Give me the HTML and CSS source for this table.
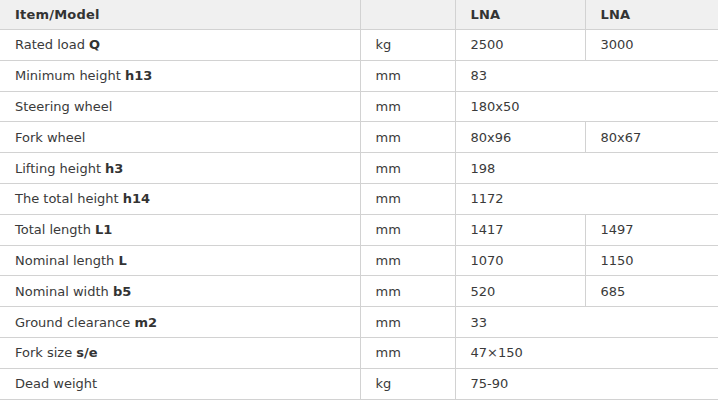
FILE: index.html
```html
<!DOCTYPE html>
<html>
<head>
<meta charset="utf-8">
<link rel="stylesheet" href="styles.css">
</head>
<body>
<table class="spec">
  <colgroup>
    <col class="c-item"><col class="c-unit"><col class="c-v1"><col class="c-v2">
  </colgroup>
  <thead>
    <tr><th>Item/Model</th><th></th><th>LNA</th><th>LNA</th></tr>
  </thead>
  <tbody>
    <tr><td>Rated load <b>Q</b></td><td>kg</td><td>2500</td><td>3000</td></tr>
    <tr><td>Minimum height <b>h13</b></td><td>mm</td><td colspan="2">83</td></tr>
    <tr><td>Steering wheel</td><td>mm</td><td colspan="2">180x50</td></tr>
    <tr><td>Fork wheel</td><td>mm</td><td>80x96</td><td>80x67</td></tr>
    <tr><td>Lifting height <b>h3</b></td><td>mm</td><td colspan="2">198</td></tr>
    <tr><td>The total height <b>h14</b></td><td>mm</td><td colspan="2">1172</td></tr>
    <tr><td>Total length <b>L1</b></td><td>mm</td><td>1417</td><td>1497</td></tr>
    <tr><td>Nominal length <b>L</b></td><td>mm</td><td>1070</td><td>1150</td></tr>
    <tr><td>Nominal width <b>b5</b></td><td>mm</td><td>520</td><td>685</td></tr>
    <tr><td>Ground clearance <b>m2</b></td><td>mm</td><td colspan="2">33</td></tr>
    <tr><td>Fork size <b>s/e</b></td><td>mm</td><td colspan="2">47×150</td></tr>
    <tr><td>Dead weight</td><td>kg</td><td colspan="2">75-90</td></tr>
  </tbody>
</table>
</body>
</html>
```
FILE: styles.css
```css
html, body {
  margin: 0;
  padding: 0;
  background: #fff;
  overflow: hidden;
}
.spec {
  border-collapse: collapse;
  table-layout: fixed;
  width: 760px;
  font-family: "DejaVu Sans", Verdana, sans-serif;
  font-size: 13px;
  color: #3a3a3a;
}
.c-item { width: 360px; }
.c-unit { width: 95px; }
.c-v1 { width: 130px; }
.c-v2 { width: 175px; }
.spec th, .spec td {
  height: 29.8px;
  padding: 0 15px;
  text-align: left;
  border: 1px solid #d2d2d2;
  white-space: nowrap;
}
.spec th:first-child, .spec td:first-child { border-left: none; }
.spec tr:first-child th { border-top: none; }
.spec thead th {
  background: #f0f0f0;
  font-weight: bold;
  color: #333;
  height: 29px;
  letter-spacing: 0.2px;
}
.spec b { font-weight: bold; color: #333; }
```
